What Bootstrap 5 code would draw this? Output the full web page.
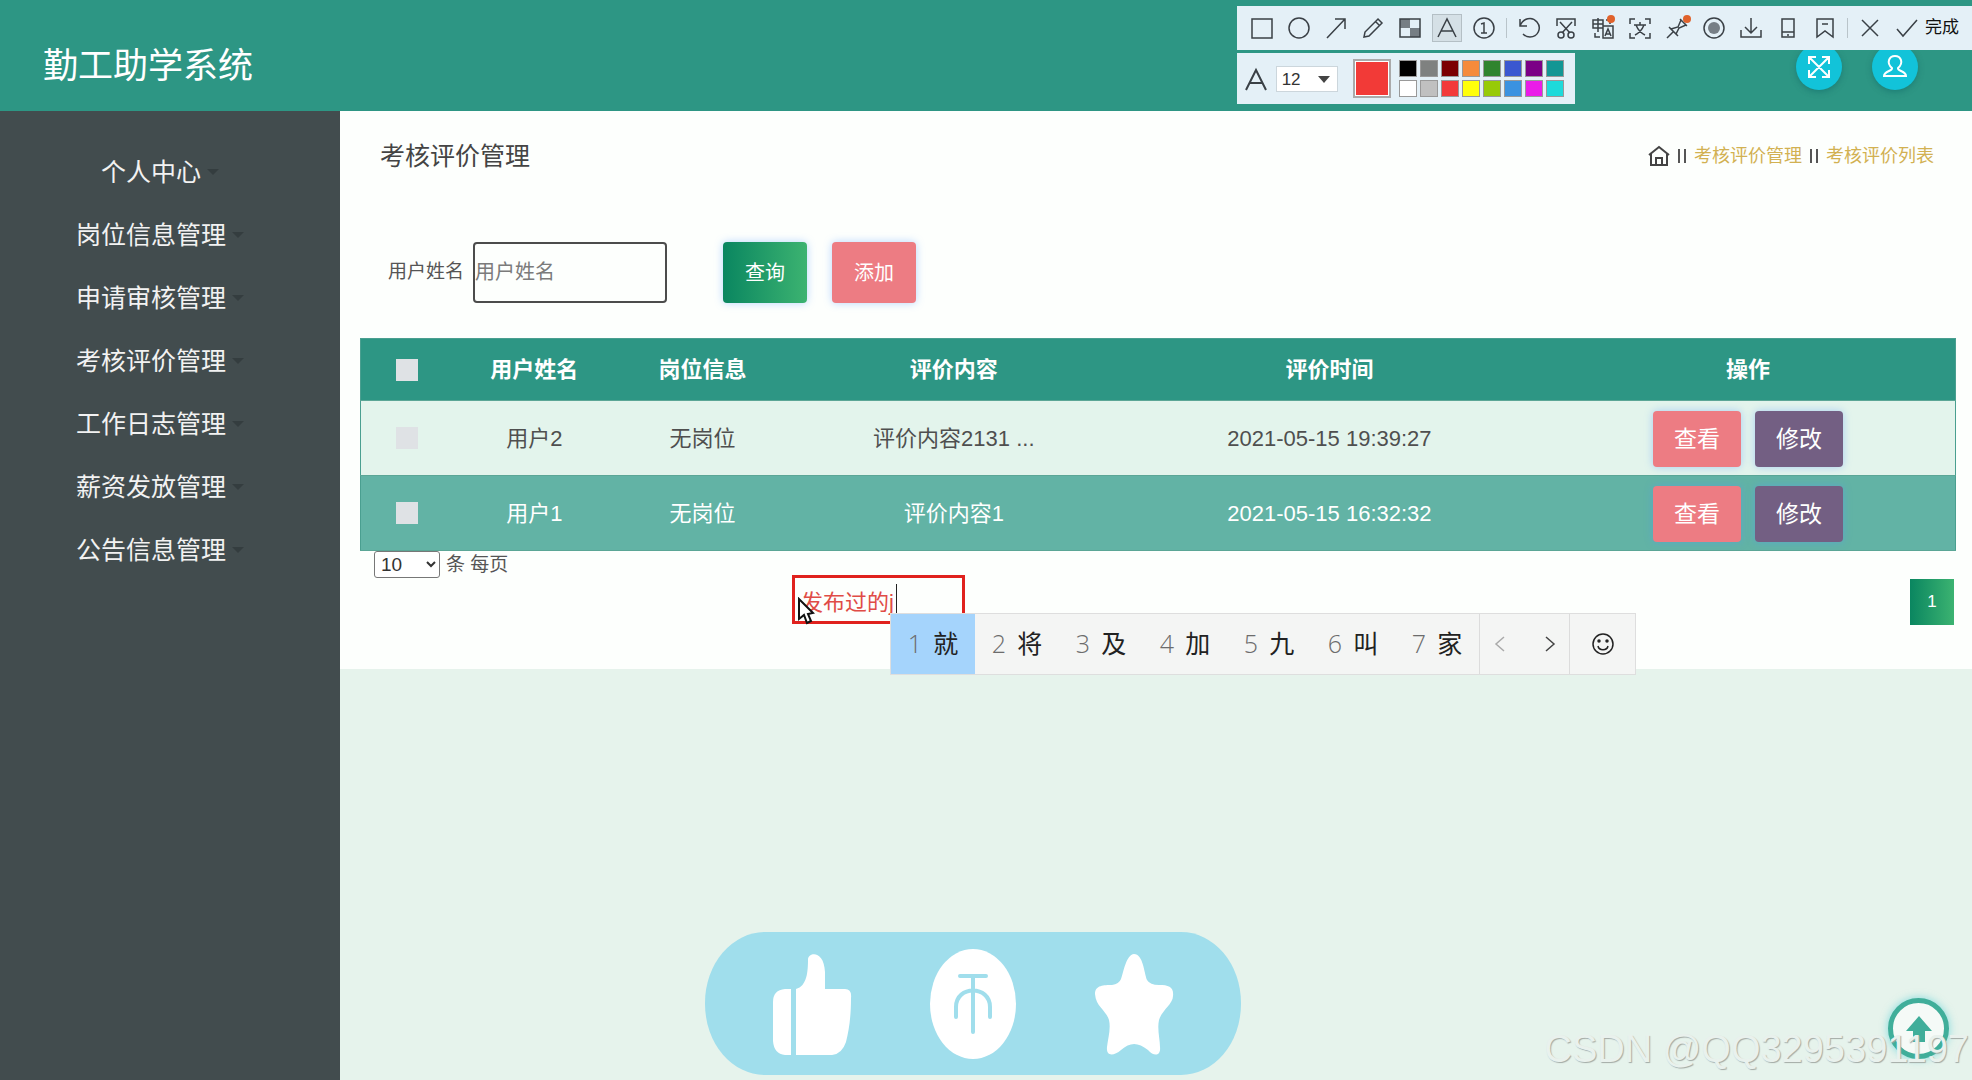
<!DOCTYPE html>
<html lang="zh-CN">
<head>
<meta charset="utf-8">
<meta name="viewport" content="width=device-width, initial-scale=1">
<title>勤工助学系统</title>
<link rel="stylesheet" href="https://cdn.jsdelivr.net/npm/bootstrap@5.3.0/dist/css/bootstrap.min.css">
<style>
  :root { --teal: #2d9684; --pink: #ed7c83; --violet: #735f83; }
  body { font-family: "Liberation Sans", "Noto Sans CJK SC", sans-serif; background: #e6f3ec; color: #555; overflow-x: hidden; }
  svg { display: block; }
  .icon-line { fill: none; stroke: currentColor; stroke-width: 2; }

  .topbar { height: 111px; background: var(--teal); padding: 20px 54px 0 43px; }
  .brand-name { font-size: 35px; line-height: 42px; color: #fff; }
  .round-btn { width: 46px; height: 46px; padding: 0; color: #fff; background: #12c3d9; border: 0; box-shadow: 0 2px 6px rgba(0,80,90,.35); }
  .round-tools { gap: 30px; }

  .app-body { min-height: calc(100vh - 111px); }
  .side { width: 340px; background: #424c4e; padding: 30px 20px 0 0; }
  .side .nav-link { font-size: 25px; line-height: 37px; padding: 13px 0; color: #f2f2f2; text-align: center; white-space: nowrap; }
  .side .dropdown-toggle::after { color: #343d3f; margin-left: 6px; border-width: 6px 6px 0; vertical-align: 6px; }

  .panel { background: #fdfffd; padding: 20px 16px 44px 20px; min-height: 557px; }
  .page-title { font-size: 25px; line-height: 50px; color: #444; margin: 0; }
  .crumbs { font-size: 18px; line-height: 26px; gap: 8px; color: #444; padding-right: 22px; }
  .crumbs a { color: #d2b152; text-decoration: none; }
  .bar-pair { width: 8px; height: 14px; border: solid #555; border-width: 0 2px; }

  .search-row { padding: 61px 0 0 28px; }
  .search-row label { font-size: 19px; margin-right: 9px; }
  .search-row .name-box { width: 194px; height: 61px; padding: 0; font-size: 20px; color: #555; background: transparent; border: 2px solid #4c4c4c; border-radius: 4px; margin-right: 56px; }
  .name-box::placeholder { color: #7b7b7b; }
  .act { color: #fff; border: 0; border-radius: 4px; padding: 0; box-shadow: 0 0 8px rgba(80,150,255,.4); }
  .act:hover { color: #fff; }
  .act-lg { width: 84px; height: 61px; font-size: 20px; margin-right: 25px; }
  .act-sm { width: 88px; height: 56px; font-size: 23px; }
  .act-pair { gap: 14px; padding-top: 2px; }
  .fill-green { background: linear-gradient(90deg, #0a8660, #3cb371); }
  .fill-pink { background: var(--pink); }
  .fill-violet { background: var(--violet); }

  .data-grid { margin: 35px 0 0; font-size: 22px; line-height: 33px; table-layout: fixed; text-align: center; border: 1px solid #4a9f90; }
  .data-grid > :not(caption) > * > * { padding: 8px 0; border-bottom: 1px solid #5ba696; vertical-align: middle; }
  .data-grid th { background: var(--teal); color: #fff; padding: 14px 0; }
  .data-grid .row-light td { background: #e3f4ec; color: #4f4f4f; }
  .data-grid .row-dark td { background: #62b3a5; color: #fff; }
  .tick { appearance: none; display: block; width: 22px; height: 22px; margin: 0 auto; background: #dfe2e5; }
  .c-tick { width: 5.8%; } .c-name { width: 10.2%; } .c-post { width: 10.9%; }
  .c-text { width: 20.6%; } .c-time { width: 26.5%; }

  .per-page { font-size: 19px; line-height: 26px; padding-left: 14px; gap: 6px; }
  .per-page select { width: 66px; height: 27px; font-size: 19px; padding: 0 2px; color: #333; background: #fff; border: 1px solid #777; border-radius: 3px; }
  .page-no { width: 44px; height: 46px; border-radius: 0; font-size: 17px; margin: 1px 2px 0 0; box-shadow: none; }

  /* floating capture tools */
  .capture { top: 6px; right: 0; z-index: 20; }
  .cap-bar { background: #e4f0f7; height: 44px; padding: 0 13px 0 6px; color: #3a4046; }
  .cap-bar button { width: 37px; height: 44px; padding: 0; border: 0; background: none; color: inherit; display: flex; align-items: center; justify-content: center; }
  .cap-bar svg { width: 26px; height: 26px; overflow: visible; }
  .cap-bar .icon-line { stroke-width: 1.5; }
  .cap-bar .picked svg { width: 28px; height: 26px; background: #d5e0e6; outline: 1px solid #b4bfc5; }
  .cap-bar i { width: 1px; height: 20px; margin: 0 3px 0 4px; background: #b9c4ca; }
  .cap-bar .finish { width: auto; font-size: 17px; color: #111; }
  .cap-opts { background: #e4f0f7; width: 338px; height: 51px; margin-top: 3px; padding: 0 11px 0 7px; color: #3a4046; }
  .cap-opts select { width: 62px; height: 26px; font-size: 17px; color: #333; border: 1px solid #ccd6dc; padding: 0 0 0 5px; background: #fff; appearance: none; }
  .size-pick::after { content: ""; position: absolute; right: 8px; top: 10px; border: solid transparent; border-width: 7px 6px 0; border-top-color: #444; }
  .ink-now { width: 38px; height: 39px; padding: 0; background: #f23a37; border: 2px solid #aaa; box-shadow: inset 0 0 0 1px #fff; }
  .inks { display: grid; grid-template-columns: repeat(8, 18px); gap: 3px; }
  .inks button { height: 17px; padding: 0; border: 1px solid #999; }

  /* annotation, candidate bar and page-wide overlays */
  .note { left: 792px; top: 575px; width: 173px; height: 49px; border: 3px solid #e0221e; z-index: 5; padding: 0 6px; background: transparent; color: #e04c46; font-size: 22px; }
  .text-bar { left: 896px; top: 584px; width: 1px; height: 29px; background: #222; z-index: 6; }
  .pointer { left: 797px; top: 597px; z-index: 7; }
  .ime { left: 890px; top: 613px; height: 62px; z-index: 8; background: #f4f5f4; border: 1px solid #dedede; font-family: "Open Sans", "Noto Sans CJK SC", sans-serif; font-size: 25px; }
  .ime button { border: 0; background: none; padding: 0; width: 84px; color: #222; display: flex; align-items: center; justify-content: center; gap: 11px; }
  .ime button span { color: #6c6c6c; font-weight: 300; }
  .ime .chosen { background: #a5d4fc; }
  .ime .icon-line { stroke-width: 1.5; }
  .ime .turn { width: 39px; }
  .ime .turn + .turn { width: 50px; padding-left: 12px; }
  .ime .face { width: 66px; border-left: 1px solid #dcdcdc; }
  .ime .pages { border-left: 1px solid #dcdcdc; }
  .praise { left: 705px; bottom: 5px; width: 536px; height: 143px; border-radius: 60px / 71px; background: #a0deec; z-index: 4; padding: 0 67px; color: #fff; }
  .praise button { border: 0; padding: 0; background: none; color: inherit; }
  .to-top { right: 23px; bottom: 21px; width: 61px; height: 61px; padding: 0; border: 5px solid #40ae9a; border-radius: 50%; background: #f5faf7; color: #40ae9a; z-index: 4; box-shadow: 0 0 8px rgba(60,200,210,.6); }
  .stamp { right: 3px; bottom: 10px; font-size: 38px; line-height: 42px; color: #e9f1ed; text-shadow: 1px 1px 1px #a2aaa6; z-index: 6; white-space: nowrap; }
</style>
<script src="https://cdn.jsdelivr.net/npm/bootstrap@5.3.0/dist/js/bootstrap.bundle.min.js"></script>
</head>
<body class="position-relative">

<header class="topbar d-flex align-items-center justify-content-between">
  <h1 class="brand-name m-0 fw-normal">勤工助学系统</h1>
  <div class="round-tools d-flex align-self-start">
    <button class="round-btn rounded-circle d-flex align-items-center justify-content-center mt-4" aria-label="全屏">
      <svg class="icon-line" width="24" height="24" viewBox="0 0 24 24"><path d="M3 3L21 21M21 3L3 21M2 9V2H9M15 2H22V9M22 15V22H15M9 22H2V15"/></svg>
    </button>
    <button class="round-btn rounded-circle d-flex align-items-center justify-content-center mt-4" aria-label="用户">
      <svg class="icon-line" width="26" height="26" viewBox="0 0 26 26"><path d="M10 14C4 9 7 2 13 2S22 9 16 14C15 17 24 17 24 22H2C2 17 11 17 10 14Z"/></svg>
    </button>
  </div>
</header>

<div class="app-body d-flex">
  <nav class="side flex-shrink-0">
    <ul class="nav flex-column">
      <li><a class="nav-link dropdown-toggle" href="#">个人中心</a></li>
      <li><a class="nav-link dropdown-toggle" href="#">岗位信息管理</a></li>
      <li><a class="nav-link dropdown-toggle" href="#">申请审核管理</a></li>
      <li><a class="nav-link dropdown-toggle" href="#">考核评价管理</a></li>
      <li><a class="nav-link dropdown-toggle" href="#">工作日志管理</a></li>
      <li><a class="nav-link dropdown-toggle" href="#">薪资发放管理</a></li>
      <li><a class="nav-link dropdown-toggle" href="#">公告信息管理</a></li>
    </ul>
  </nav>

  <main class="flex-grow-1">
    <section class="panel">
      <div class="d-flex align-items-center justify-content-between ps-3 ms-1">
        <h2 class="page-title fw-normal">考核评价管理</h2>
        <div class="crumbs d-flex align-items-center">
          <svg class="icon-line" width="22" height="22" viewBox="0 0 22 22"><path d="M1 10L11 2L21 10M3 9V20H19V9M8 20V13H14V20"/></svg>
          <span class="bar-pair"></span>
          <a href="#">考核评价管理</a>
          <span class="bar-pair"></span>
          <a href="#">考核评价列表</a>
        </div>
      </div>

      <form class="search-row d-flex align-items-center">
        <label for="userName">用户姓名</label>
        <input class="name-box" id="userName" type="text" placeholder="用户姓名">
        <button type="button" class="btn act act-lg fill-green">查询</button>
        <button type="button" class="btn act act-lg fill-pink">添加</button>
      </form>

      <table class="table data-grid">
        <colgroup><col class="c-tick"><col class="c-name"><col class="c-post"><col class="c-text"><col class="c-time"><col></colgroup>
        <thead>
          <tr>
            <th><input class="tick" type="checkbox" aria-label="全选"></th>
            <th>用户姓名</th><th>岗位信息</th><th>评价内容</th><th>评价时间</th><th>操作</th>
          </tr>
        </thead>
        <tbody>
          <tr class="row-light">
            <td><input class="tick" type="checkbox" aria-label="选择 用户2"></td>
            <td>用户2</td><td>无岗位</td><td>评价内容2131 ...</td><td>2021-05-15 19:39:27</td>
            <td><div class="act-pair d-flex justify-content-center"><button class="btn act act-sm fill-pink">查看</button><button class="btn act act-sm fill-violet">修改</button></div></td>
          </tr>
          <tr class="row-dark">
            <td><input class="tick" type="checkbox" aria-label="选择 用户1"></td>
            <td>用户1</td><td>无岗位</td><td>评价内容1</td><td>2021-05-15 16:32:32</td>
            <td><div class="act-pair d-flex justify-content-center"><button class="btn act act-sm fill-pink">查看</button><button class="btn act act-sm fill-violet">修改</button></div></td>
          </tr>
        </tbody>
      </table>

      <div class="per-page d-flex align-items-center">
        <select id="perPage"><option>10</option><option>25</option><option>50</option></select>
        <label for="perPage">条 每页</label>
      </div>
      <div class="d-flex justify-content-end">
        <button class="btn act page-no fill-green">1</button>
      </div>
    </section>
  </main>
</div>

<div class="capture position-absolute">
  <div class="cap-bar d-flex align-items-center">
    <button aria-label="矩形"><svg class="icon-line" viewBox="0 0 26 26"><path d="M3 4H23V23H3Z"/></svg></button>
    <button aria-label="椭圆"><svg class="icon-line" viewBox="0 0 26 26"><circle cx="13" cy="13" r="10"/></svg></button>
    <button aria-label="箭头"><svg class="icon-line" viewBox="0 0 26 26"><path d="M4 23L22 4M12 4H22V14"/></svg></button>
    <button aria-label="画笔"><svg class="icon-line" viewBox="0 0 26 26"><path d="M4 22L5 17L18 4L22 8L9 21ZM16 7L20 11"/></svg></button>
    <button aria-label="马赛克"><svg class="icon-line" viewBox="0 0 26 26"><path d="M3 4H23V22H3Z"/><path d="M3 4H13V13H23V22H13V13H3Z" fill="currentColor" opacity=".65" stroke="none"/></svg></button>
    <button class="picked" aria-label="文字"><svg class="icon-line" viewBox="0 0 28 26"><path d="M5 22L14 4L23 22M8 16H20"/></svg></button>
    <button aria-label="序号"><svg class="icon-line" viewBox="0 0 26 26"><circle cx="13" cy="13" r="10"/><path d="M10 9L13 8V18M10 18H16"/></svg></button>
    <i></i>
    <button aria-label="撤销"><svg class="icon-line" viewBox="0 0 26 26"><path d="M4 4V11H11M4 11C7 3 16 1 21 7S22 22 14 22C11 22 9 21 7 19"/></svg></button>
    <button aria-label="剪切"><svg class="icon-line" viewBox="0 0 26 26"><path d="M4 11V4H22V11M7 7L17 18M19 7L9 18"/><circle cx="8" cy="20" r="3"/><circle cx="18" cy="20" r="3"/></svg></button>
    <button aria-label="翻译"><svg class="icon-line" viewBox="0 0 26 26"><path d="M3 5H13V13H3ZM3 9H13M8 3V17M13 11H23V23H13ZM15 21L18 14L21 21M16 19H20M16 5H20V9M5 18V22H10"/><circle cx="21" cy="4" r="4" fill="#e0622c" stroke="none"/></svg></button>
    <button aria-label="识别文字"><svg class="icon-line" viewBox="0 0 26 26"><path d="M3 9V4H8M18 4H23V9M23 18V23H18M8 23H3V18M7 10H19M13 7V10M17 10C15 15 12 18 8 20M9 10C11 15 14 18 18 20"/></svg></button>
    <button aria-label="贴图"><svg class="icon-line" viewBox="0 0 26 26"><path d="M3 23L9 17M5 12L14 21M7 14L14 12L17 5L22 10L15 13L12 19ZM16 4L23 11"/><circle cx="23" cy="4" r="4" fill="#e0622c" stroke="none"/></svg></button>
    <button aria-label="录制"><svg class="icon-line" viewBox="0 0 26 26"><circle cx="13" cy="13" r="10"/><circle cx="13" cy="13" r="6" fill="#777f86" stroke="none"/></svg></button>
    <button aria-label="下载"><svg class="icon-line" viewBox="0 0 26 26"><path d="M13 3V18M7 12L13 18L19 12M3 15V22H23V15"/></svg></button>
    <button aria-label="手机"><svg class="icon-line" viewBox="0 0 26 26"><path d="M7 4H19V22H7ZM7 17H19M12 20H14"/></svg></button>
    <button aria-label="收藏"><svg class="icon-line" viewBox="0 0 26 26"><path d="M5 4H21V22L13 16L5 22ZM10 9H16"/></svg></button>
    <i></i>
    <button aria-label="关闭"><svg class="icon-line" viewBox="0 0 26 26"><path d="M5 5L21 21M21 5L5 21"/></svg></button>
    <button aria-label="确认"><svg class="icon-line" viewBox="0 0 26 26"><path d="M3 14L9 21L23 5"/></svg></button>
    <button class="finish">完成</button>
  </div>
  <div class="cap-opts d-flex align-items-center justify-content-between">
    <svg class="icon-line" width="24" height="26" viewBox="0 0 24 26"><path d="M2 24L12 4L22 24M6 17H18"/></svg>
    <div class="size-pick position-relative me-1"><select aria-label="字号" class="d-block"><option>12</option><option>14</option></select></div>
    <button class="ink-now ms-1" aria-label="当前颜色"></button>
    <div class="inks">
      <button style="background:#000" aria-label="黑"></button><button style="background:#7f8180" aria-label="灰"></button><button style="background:#7c0002" aria-label="深红"></button><button style="background:#f58b3c" aria-label="橙"></button><button style="background:#2f842e" aria-label="绿"></button><button style="background:#3a57d0" aria-label="蓝"></button><button style="background:#7b0086" aria-label="紫"></button><button style="background:#129694" aria-label="青"></button>
      <button style="background:#fff" aria-label="白"></button><button style="background:#c0c0c0" aria-label="浅灰"></button><button style="background:#f23a3a" aria-label="红"></button><button style="background:#ffff0a" aria-label="黄"></button><button style="background:#97ca07" aria-label="黄绿"></button><button style="background:#3b92e0" aria-label="天蓝"></button><button style="background:#ea1ce8" aria-label="品红"></button><button style="background:#1ddada" aria-label="浅青"></button>
    </div>
  </div>
</div>

<input class="note position-absolute" type="text" value="发布过的j" aria-label="批注">
<span class="text-bar position-absolute"></span>
<svg class="pointer position-absolute" width="18" height="28" viewBox="0 0 18 28"><path d="M2 2V22L7 18L10 26L14 24L11 17L16 16Z" fill="#fff" stroke="#111" stroke-width="2"/></svg>

<div class="ime position-absolute d-flex">
  <button class="chosen"><span>1</span>就</button>
  <button><span>2</span>将</button>
  <button><span>3</span>及</button>
  <button><span>4</span>加</button>
  <button><span>5</span>九</button>
  <button><span>6</span>叫</button>
  <button><span>7</span>家</button>
  <div class="pages d-flex">
    <button class="turn" aria-label="上一页"><svg class="icon-line" width="12" height="18" viewBox="0 0 12 18"><path d="M10 2L2 9L10 16" stroke="#aaa"/></svg></button>
    <button class="turn" aria-label="下一页"><svg class="icon-line" width="12" height="18" viewBox="0 0 12 18"><path d="M2 2L10 9L2 16" stroke="#444"/></svg></button>
  </div>
  <button class="face" aria-label="表情"><svg class="icon-line" width="24" height="24" viewBox="0 0 24 24"><circle cx="12" cy="12" r="10"/><path d="M7 14C8 19 16 19 17 14"/><circle cx="8" cy="9" r="1" fill="#333"/><circle cx="16" cy="9" r="1" fill="#333"/></svg></button>
</div>

<div class="praise position-absolute d-flex align-items-center justify-content-between">
  <button aria-label="点赞"><svg width="80" height="104" viewBox="0 0 80 104" fill="currentColor"><path d="M19 37H13Q1 38 1 50V89Q2 102 13 103H19ZM24 37C35 34 36 20 36 7C37 0 52 -2 53 20V37H73Q80 37 79 46C79 65 77 78 74 90Q70 102 60 103H24Z"/></svg></button>
  <button aria-label="投币"><svg width="86" height="110" viewBox="0 0 86 110"><ellipse cx="43" cy="55" rx="43" ry="55" fill="#fff"/><path d="M30 27H56M43 27V83M26 68V58C26 36 60 36 60 58V68" fill="none" stroke="#a0deec" stroke-width="4" stroke-linecap="round"/></svg></button>
  <button aria-label="收藏"><svg width="80" height="104" viewBox="0 0 80 104" fill="currentColor"><path d="M40 2C49 2 50 20 53 28Q56 33 65 33C75 33 80 35 79 44C79 52 68 58 65 68C63 77 66 87 66 95C67 104 60 105 54 98C44 90 36 90 27 98C20 104 12 105 13 95C14 86 17 77 15 68C12 58 2 55 1 42C1 33 10 33 18 33Q25 32 27 27C30 19 32 3 40 2Z"/></svg></button>
</div>

<button class="to-top position-absolute d-flex align-items-center justify-content-center" aria-label="回到顶部"><svg width="28" height="28" viewBox="0 0 28 28" fill="currentColor"><path d="M14 1L27 16H20V27H8V16H1Z"/></svg></button>
<div class="stamp position-absolute">CSDN @QQ3295391197</div>
</body>
</html>
